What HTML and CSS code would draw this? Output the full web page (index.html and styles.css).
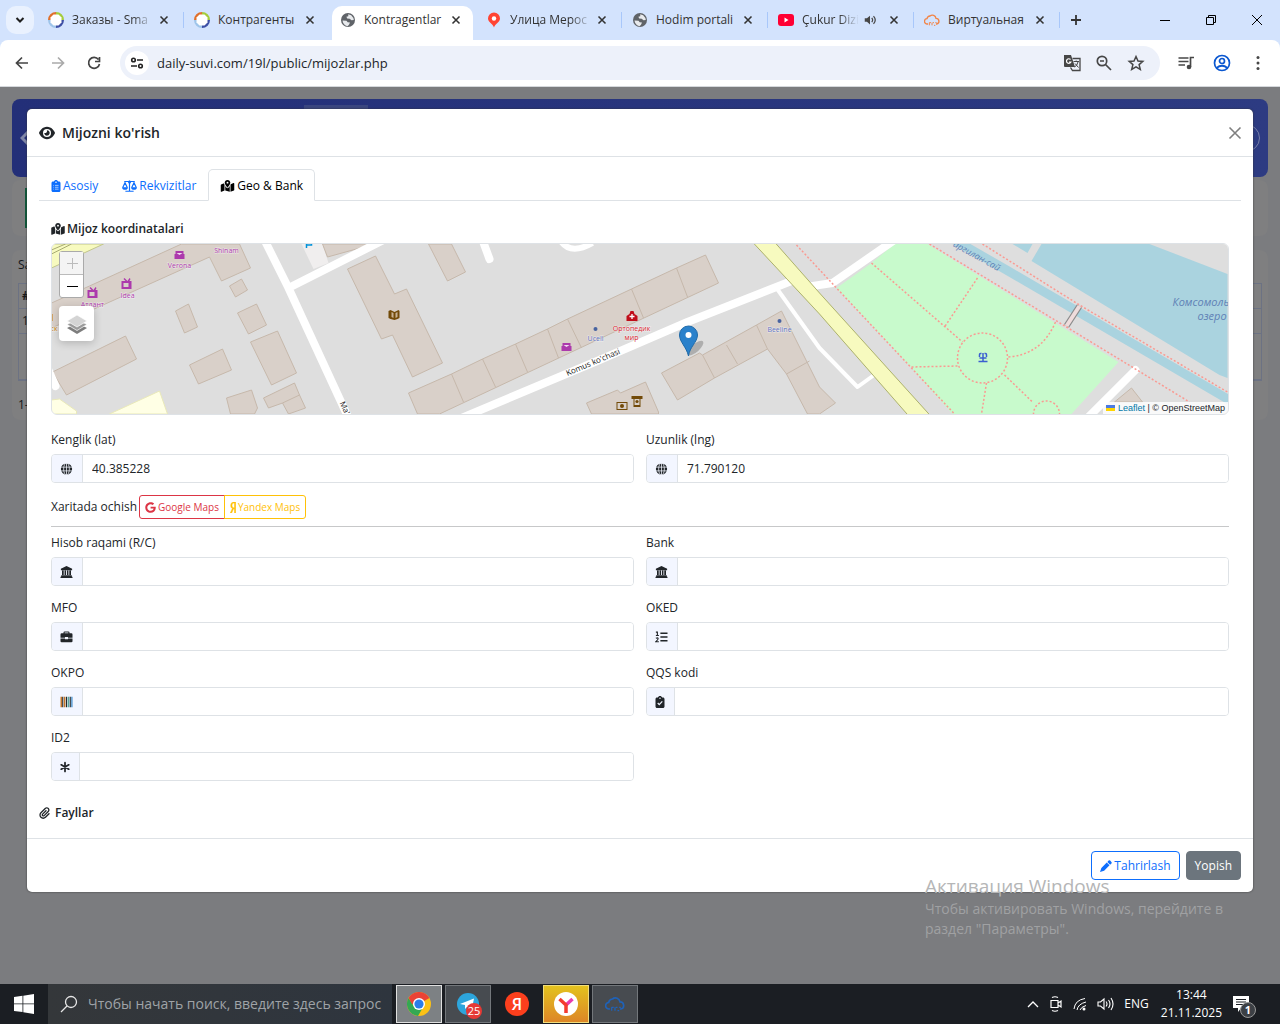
FILE: index.html
```html
<!DOCTYPE html>
<html lang="uz">
<head>
    <meta charset="UTF-8">
    <meta name="viewport" content="width=device-width, initial-scale=1.0">
    <title>Kontragentlar</title>
    <link rel="stylesheet" href="styles.css">
</head>
<body>
    <!-- icon sprite -->
    <svg class="sprite" aria-hidden="true">
        <symbol id="i-close" viewBox="0 0 16 16"><path d="M4 4l8 8M12 4l-8 8" fill="none" stroke="currentColor" stroke-width="1.8"/></symbol>
        <symbol id="i-smart" viewBox="0 0 16 16">
            <path d="M8 1.500A6.500 6.500 0 0 1 14.500 8" fill="none" stroke="#a5cc3c" stroke-width="3"/>
            <path d="M14.500 8A6.500 6.500 0 0 1 8 14.500" fill="none" stroke="#3d4fa5" stroke-width="3"/>
            <path d="M8 14.500A6.500 6.500 0 0 1 1.500 8" fill="none" stroke="#9fc5ea" stroke-width="3"/>
            <path d="M1.500 8A6.500 6.500 0 0 1 8 1.500" fill="none" stroke="#e0702c" stroke-width="3"/>
            <path d="M5.500 2.500h5l3 3v5l-3 3h-5l-3-3v-5z" fill="#fff"/>
        </symbol>
        <symbol id="i-world" viewBox="0 0 16 16">
            <circle cx="8" cy="8" r="7" fill="#5f6368"/>
            <path d="M2.500 8.500l4 .2 1.200 1.600 2.300.2-1 2.300-1.500 1.400C4.800 13.800 2.700 11.500 2.500 8.500zM8.200 2.300l3 .9 2.200 2.800.4 2-2.300.3-1.800-1.600-2.500-.3-.8-1.700 1.900-.5z" fill="#e8eaed"/>
        </symbol>
        <symbol id="i-cloud" viewBox="0 0 24 24"><path d="M6 18H5a4 4 0 0 1-.5-8A5 5 0 0 1 9 6a5.500 5.500 0 0 1 9 3.500A4.300 4.300 0 0 1 19 18h-1" fill="none" stroke="currentColor" stroke-width="2"/><path d="M8 16v4M8 16h2.500M12 16v4M15 16h-2M15 20h2M17 16h2" fill="none" stroke="currentColor" stroke-width="1.500"/></symbol>
        <symbol id="i-map" viewBox="0 0 576 512"><path fill="currentColor" fill-rule="evenodd" d="M408 120c0 54.600-73.100 151.900-105.200 192c-7.700 9.600-22 9.600-29.600 0C241.100 271.900 168 174.600 168 120C168 53.700 221.700 0 288 0s120 53.700 120 120zm8 80.400c3.500-6.900 6.700-13.800 9.600-20.600c.5-1.200 1-2.500 1.500-3.700l116-46.400C558.900 123.400 576 135 576 152V422.800c0 9.800-6 18.600-15.100 22.300L416 503V200.400zM137.600 138.300c2.400 14.100 7.200 28.300 12.800 41.500c2.900 6.800 6.100 13.700 9.600 20.600V451.800L32.900 502.700C17.100 509 0 497.400 0 480.400V209.600c0-9.800 6-18.600 15.100-22.300l122.600-49zM327.800 332c13.900-17.400 35.700-45.700 56.200-77V504.300L192 449.400V255c20.500 31.300 42.300 59.600 56.200 77c20.500 25.600 59.100 25.600 79.600 0zM288 152a40 40 0 1 0 0-80 40 40 0 1 0 0 80z"/></symbol>
        <symbol id="i-globe" viewBox="0 0 16 16"><circle cx="8" cy="8" r="7.500" fill="currentColor"/><path d="M0 5.500h16M0 10.500h16M8 0v16" stroke="#f3f6ff" fill="none"/><ellipse cx="8" cy="8" rx="3.800" ry="8" stroke="#f3f6ff" fill="none"/></symbol>
        <symbol id="i-bank" viewBox="0 0 16 16"><path fill="currentColor" d="M8 0l7.500 3.500V5.500H.5V3.500zM2 6h2.300v6H2zM5.400 6h2v6h-2zM8.600 6h2v6h-2zM11.700 6H14v6h-2.300zM1 12.300h14V13.500l1 1V16H0v-1.500l1-1z"/></symbol>
        <symbol id="i-case" viewBox="0 0 16 16"><path fill="currentColor" fill-rule="evenodd" d="M4 3V2q0-1.500 1.500-1.500h5Q12 .5 12 2v1h2.500Q16 3 16 4.500V9h-6V8H6v1H0V4.500Q0 3 1.500 3zm1.500 0h5V2h-5zM0 10h6v1h4v-1h6v3.500q0 1.500-1.500 1.500h-13Q0 15 0 13.500z"/></symbol>
        <symbol id="i-list" viewBox="0 0 16 16"><path d="M6.500 3H16M6.500 8H16M6.500 13H16" stroke="currentColor" stroke-width="2"/><path d="M.5 1.500H2.500V6M.5 6h4M.5 9.800q3-1.500 3 .5 0 1-3 4h4" fill="none" stroke="currentColor" stroke-width="1.500"/></symbol>
        <symbol id="i-barcode" viewBox="0 0 16 16"><path d="M1 1v14" stroke="#c3762a" stroke-width="2"/><path d="M3 1v14M8 1v14M13 1v14" stroke="#23282d" stroke-width="1.500"/><path d="M5.500 1v14" stroke="#c3762a" stroke-width="2"/><path d="M10.500 1v14" stroke="#5aa7a0" stroke-width="2"/><path d="M15.200 1v14" stroke="#2a7fc4" stroke-width="1.500"/></symbol>
        <symbol id="i-check" viewBox="0 0 384 512"><path fill="currentColor" fill-rule="evenodd" d="M192 0c-41.800 0-77.400 26.700-90.500 64H64C28.700 64 0 92.700 0 128V448c0 35.300 28.700 64 64 64H320c35.300 0 64-28.700 64-64V128c0-35.300-28.700-64-64-64H282.500C269.400 26.700 233.800 0 192 0zm0 64a32 32 0 1 1 0 64 32 32 0 1 1 0-64z"/><path d="M95 300l65 70 130-140" fill="none" stroke="#f3f6ff" stroke-width="52"/></symbol>
        <symbol id="i-clip-list" viewBox="0 0 384 512"><path fill="currentColor" fill-rule="evenodd" d="M192 0c-41.800 0-77.400 26.700-90.500 64H64C28.700 64 0 92.700 0 128V448c0 35.300 28.700 64 64 64H320c35.300 0 64-28.700 64-64V128c0-35.300-28.700-64-64-64H282.500C269.400 26.700 233.800 0 192 0zm0 64a32 32 0 1 1 0 64 32 32 0 1 1 0-64z"/><path d="M80 230h30M150 230h150M80 310h30M150 310h150M80 390h30M150 390h150" stroke="#fff" stroke-width="26"/></symbol>
        <symbol id="i-scale" viewBox="0 0 20 16"><path d="M3 2h14M10 1v14M4.500 15h11M1 10l3-6.500L7 10M13 10l3-6.500L19 10" fill="none" stroke="currentColor" stroke-width="1.600"/><circle cx="10" cy="2.500" r="2" fill="currentColor"/><path d="M0 9.500h8Q7.500 13 4 13T0 9.500zM12 9.500h8Q19.500 13 16 13t-4-3.500z" fill="currentColor"/></symbol>
        <symbol id="i-aster" viewBox="0 0 16 16"><path d="M8 1v14M2 4.500l12 7M14 4.500l-12 7" stroke="currentColor" stroke-width="2.800" stroke-linecap="round"/></symbol>
        <symbol id="i-layers" viewBox="0 0 26 26"><path d="M13 12l10 5-10 6-10-6z" fill="#7d7d7d"/><path d="M13 8.500l10 5-10 6-10-6z" fill="#9b9b9b" stroke="#fff" stroke-width=".7"/><path d="M13 4l10 6-10 6-10-6z" fill="#d4d4d4" stroke="#fff" stroke-width=".7"/></symbol>
    </svg>

    <header class="browser">
        <div class="tab-strip">
            <button class="tab-search" aria-label="Search tabs"><svg width="12" height="12" viewBox="0 0 12 12"><path d="M2.500 4L6 7.500 9.500 4" fill="none" stroke="#1f1f1f" stroke-width="2"/></svg></button>
            <div class="tabs">
                <div class="tab"><svg class="fav"><use href="#i-smart"/></svg><span class="tab-title fade">Заказы - Sma</span><button aria-label="Close"><svg><use href="#i-close"/></svg></button></div>
                <div class="tab no-line"><svg class="fav"><use href="#i-smart"/></svg><span class="tab-title">Контрагенты</span><button aria-label="Close"><svg><use href="#i-close"/></svg></button></div>
                <div class="tab active"><svg class="fav"><use href="#i-world"/></svg><span class="tab-title">Kontragentlar</span><button aria-label="Close"><svg><use href="#i-close"/></svg></button></div>
                <div class="tab"><svg class="fav" viewBox="0 0 16 16"><path d="M8 15.500C7 11.500 2 10.500 2 6.500a6 6 0 0 1 12 0c0 4-5 5-6 9z" fill="#f43"/><circle cx="8" cy="6.500" r="2.200" fill="#fff"/></svg><span class="tab-title fade">Улица Мерос</span><button aria-label="Close"><svg><use href="#i-close"/></svg></button></div>
                <div class="tab"><svg class="fav"><use href="#i-world"/></svg><span class="tab-title">Hodim portali</span><button aria-label="Close"><svg><use href="#i-close"/></svg></button></div>
                <div class="tab"><svg class="fav" viewBox="0 0 16 16"><rect y="2" width="16" height="12" rx="3" fill="#f03"/><path d="M6.500 5.500L10.500 8l-4 2.500z" fill="#fff"/></svg><span class="tab-title fade">Çukur Dizi</span><svg class="sound" viewBox="0 0 16 16"><path d="M2 6h2.500L8 3v10L4.500 10H2z" fill="#474747"/><path d="M10 5.500q2 2.500 0 5M12 3.500q4 4.500 0 9" fill="none" stroke="#474747" stroke-width="1.400"/></svg><button aria-label="Close"><svg><use href="#i-close"/></svg></button></div>
                <div class="tab"><svg class="fav orange"><use href="#i-cloud"/></svg><span class="tab-title">Виртуальная</span><button aria-label="Close"><svg><use href="#i-close"/></svg></button></div>
                <button class="new-tab" aria-label="New tab"><svg width="12" height="12" viewBox="0 0 12 12"><path d="M6 1v10M1 6h10" stroke="#333" stroke-width="1.800"/></svg></button>
            </div>
            <div class="win-buttons">
                <button aria-label="Minimize"><svg viewBox="0 0 12 12"><path d="M1 6.500h10" stroke="#000"/></svg></button>
                <button aria-label="Restore"><svg viewBox="0 0 12 12"><path d="M1.500 3.500h7v7h-7zM3.500 3.500v-2h7v7h-2" fill="none" stroke="#000"/></svg></button>
                <button aria-label="Close window"><svg viewBox="0 0 12 12"><path d="M1 1l10 10M11 1L1 11" stroke="#000"/></svg></button>
            </div>
        </div>
        <div class="toolbar">
            <button aria-label="Back"><svg viewBox="0 0 18 18"><path d="M15 9H4M9 3.500L3.500 9 9 14.500" fill="none" stroke="#444" stroke-width="1.700"/></svg></button>
            <button aria-label="Forward"><svg viewBox="0 0 18 18"><path d="M3 9h11M9 3.500L14.500 9 9 14.500" fill="none" stroke="#aaa" stroke-width="1.700"/></svg></button>
            <button aria-label="Reload"><svg viewBox="0 0 18 18"><path d="M13.500 5.500A5.500 5.500 0 1 0 14.500 10M14.500 3v4.500H10" fill="none" stroke="#444" stroke-width="1.700"/></svg></button>
            <div class="address">
                <span class="tune"><svg width="14" height="14" viewBox="0 0 14 14"><g fill="none" stroke="#222" stroke-width="1.600"><circle cx="3.500" cy="4" r="1.800"/><circle cx="10.500" cy="10" r="1.800"/><path d="M7 4h6M1 10h6"/></g></svg></span>
                <input class="url" type="text" aria-label="Address" value="daily-suvi.com/19l/public/mijozlar.php">
                <button aria-label="Translate"><svg viewBox="0 0 18 18"><path d="M1 1h7l4 12H2a1 1 0 0 1-1-1z" fill="#474747"/><path d="M9.500 4.500H17v12H9.500l-2-3" fill="none" stroke="#474747" stroke-width="1.300"/><path d="M7.500 5.500a2.300 2.300 0 1 0 .4 2.500H6" fill="none" stroke="#fff" stroke-width="1.200"/><path d="M10.500 7.500H16M13.200 6.500v1M15 8q-1 4-3.500 5M12 9.500l3.500 4" fill="none" stroke="#474747"/></svg></button>
                <button aria-label="Zoom"><svg viewBox="0 0 18 18"><circle cx="7" cy="7" r="4.700" fill="none" stroke="#474747" stroke-width="1.700"/><path d="M10.500 10.500L16 16M5 7h4" stroke="#474747" stroke-width="1.700"/></svg></button>
                <button aria-label="Bookmark"><svg viewBox="0 0 18 18"><path d="M9 2.500l2 4.500 4.800.4-3.700 3.200 1.200 4.800L9 12.800l-4.300 2.600 1.200-4.800L2.200 7.400 7 7z" fill="none" stroke="#474747" stroke-width="1.500"/></svg></button>
            </div>
            <button class="gap-left" aria-label="Media"><svg viewBox="0 0 18 18"><path d="M1.500 4h10M1.500 7.500h10M1.500 11H8M13.500 13V3.500H17" fill="none" stroke="#474747" stroke-width="1.700"/><circle cx="12" cy="13" r="2.300" fill="#474747"/></svg></button>
            <button aria-label="Profile"><svg viewBox="0 0 18 18"><g fill="none" stroke="#0b57d0" stroke-width="1.700"><circle cx="9" cy="9" r="7.500"/><circle cx="9" cy="7" r="2.500"/><path d="M3.500 14q5.500-4.500 11 0"/></g></svg></button>
            <button aria-label="Menu"><svg viewBox="0 0 18 18"><g fill="#474747"><circle cx="9" cy="3.500" r="1.500"/><circle cx="9" cy="9" r="1.500"/><circle cx="9" cy="14.500" r="1.500"/></g></svg></button>
        </div>
    </header>

    <main class="page">
        <!-- page under the backdrop -->
        <div class="under" aria-hidden="true">
            <div class="under-nav"><svg width="14" height="18" viewBox="0 0 14 18"><path d="M10 1L2 9l8 8" fill="none" stroke="#8087a8" stroke-width="3"/></svg><span class="under-link"></span><span class="under-ring"></span></div>
            <div class="under-card toolbar-card"><span class="under-green"></span></div>
            <div class="under-card list-card">
                <p>Sa</p>
                <div class="under-table"><b>#</b><span>1</span><span></span></div>
                <p>1-</p>
            </div>
        </div>

        <section class="modal" role="dialog" aria-labelledby="modal-title">
            <div class="modal-header">
                <svg width="16" height="16" viewBox="0 0 576 512"><path fill="currentColor" d="M288 32c-80.800 0-145.500 36.800-192.600 80.600C48.600 156 17.300 208 2.500 243.700c-3.300 7.900-3.300 16.700 0 24.600C17.300 304 48.600 356 95.400 399.400C142.500 443.200 207.200 480 288 480s145.500-36.800 192.600-80.600c46.800-43.500 78.100-95.400 93-131.100c3.300-7.900 3.300-16.700 0-24.600c-14.900-35.700-46.200-87.700-93-131.100C433.500 68.800 368.800 32 288 32zM144 256a144 144 0 1 1 288 0 144 144 0 1 1 -288 0zm144-64c0 35.300-28.700 64-64 64c-7.100 0-13.900-1.200-20.300-3.300c-5.500-1.800-11.900 1.600-11.700 7.400c.3 6.900 1.300 13.800 3.200 20.700c13.700 51.200 66.400 81.600 117.600 67.900s81.600-66.400 67.900-117.600c-11.100-41.500-47.800-69.400-88.600-71.100c-5.800-.2-9.200 6.100-7.400 11.700c2.100 6.400 3.300 13.200 3.300 20.300z"/></svg>
                <h1 id="modal-title">Mijozni ko'rish</h1>
                <button class="btn-close" aria-label="Yopish"><svg width="14" height="14" viewBox="0 0 14 14"><path d="M1.500 1.500l11 11M12.500 1.500l-11 11" stroke="#7f7f7f" stroke-width="1.600"/></svg></button>
            </div>

            <div class="modal-body">
                <nav class="nav-tabs">
                    <a href="#asosiy"><svg class="narrow"><use href="#i-clip-list"/></svg>Asosiy</a>
                    <a href="#rekvizitlar"><svg class="wide"><use href="#i-scale"/></svg>Rekvizitlar</a>
                    <a href="#geo" class="active"><svg class="wide"><use href="#i-map"/></svg>Geo &amp; Bank</a>
                </nav>

                <div class="tab-pane" id="geo">
                    <h2><svg width="14" height="12"><use href="#i-map"/></svg>Mijoz koordinatalari</h2>
                    <div class="map">
                        <svg class="map-canvas" viewBox="52 244 1177 170" preserveAspectRatio="xMidYMid slice">
                            <rect x="52" y="244" width="1177" height="170" fill="#dedede"/>
                            <!-- park and water -->
                            <path d="M837 288l35-25 23-19h33l191 118-47 52H953l-41-46z" fill="#c8facc"/>
                            <path d="M1042 244h108l78 30v104l-8-3-188-114zM1013 244h20l-5 9z" fill="#aad3df"/>
                            <path d="M955 240l52 30 223 130" fill="none" stroke="#aad3df" stroke-width="9"/>
                            <path d="M52 400l8-1 17 12v3H52zM110 414l50-23 8 23z" fill="#ffffe5" stroke="#e9e9b9"/>
                            <path d="M302 244h21l6 19-15 6z" fill="#f0eeee"/>
                            <!-- buildings -->
                            <g fill="#d9d0c9" stroke="#c6b8ab" stroke-width="1">
                                <path d="M52 303l38-17 92-42h58l11 24-29 13-12-24L88 312l-36 16z"/>
                                <path d="M230 286l12-7 6 11-12 7zM176 311l13-7 9 23-13 6zM238 313l19-9 10 21-18 9zM251 342l27-11 19 42-25 12zM190 365l33-16 9 21-33 14z"/>
                                <path d="M53 372l73-36 11 23-70 36zM227 398l25-8 6 18-3 6h-24zM264 398l31-15 5 12 6 13-17 6-6-11-14 5zM283 403l17-8"/>
                                <path d="M323 244h52l-47 13zM348 269l28-13 19 38 12-5 36 74-30 14-20-42-11 4zM429 244h23l14 28-18 9z"/>
                                <path d="M409 393l43-19 31-15 33-15 32-15 20-10 64-30 45-21 29-13 13 28-279 131h-22z"/>
                                <path d="M452 374l12 28M483 359l13 28M516 344l12 28M548 329l11 29M568 319l14 29M632 289l12 29M677 268l11 29"/>
                                <path d="M662 373l38-20 3 2 54-30 25-14 38 76 16 16-16 11h-12l-21-40-19-25-53 29-37 22z"/>
                                <path d="M703 355l12 23M727 345l11 19M757 325l11 24M810 361l-23 13"/>
                                <path d="M587 403l31-13 3 3 25-11 13 30v2h-67zM1115 402l17-14 11 14z"/>
                            </g>
                            <!-- roads -->
                            <g fill="none" stroke="#fff" stroke-linejoin="round">
                                <path d="M265 240l24 48 60 130M289 288l95-48" stroke-width="8"/>
                                <path d="M48 368l8 18M483 240l7 19" stroke-width="8" stroke-linecap="round"/>
                                <path d="M562 242q10 13 31 1" stroke-width="6"/>
                                <path d="M462 418l138-58 88-38 104-41" stroke-width="8"/>
                                <path d="M777 288l43 60 38 39 18-13" stroke-width="4"/>
                                <path d="M800 288l33-5 62-43" stroke-width="8"/>
                                <path d="M1136 370l-48 48" stroke-width="8" stroke-linecap="round"/>
                            </g>
                            <path d="M52 268l52-24H52z" fill="#f7fabf" stroke="#c2c68c"/>
                            <path d="M52 250l14-6M52 254l20-10" stroke="#a7ab72"/>
                            <path d="M753 242h22l45 51 113 125h-22l-91-104z" fill="#f7fabf" stroke="#adb26c"/>
                            <path d="M1067 326l13-20" stroke="#8a8a8a" stroke-width="6"/>
                            <path d="M1067 326l13-20" stroke="#eedcdc" stroke-width="4"/>
                            <!-- footpaths -->
                            <g fill="none" stroke="#fa9a92" stroke-width="1.500" stroke-dasharray="2 2">
                                <path d="M797 245l40 43 75 80 43 46M930 244l137 83 123 75M983 244l97 61 148 87M872 263l91 79M978 278l-33 49M1056 322q-14 33-48 35M912 367l46-1M1005 375l28 27M987 383l-5 31"/>
                                <circle cx="983" cy="358" r="25"/>
                                <circle cx="1047" cy="414" r="13"/>
                            </g>
                            <!-- points of interest -->
                            <g class="poi">
                                <g fill="#ac39ac">
                                    <path d="M176 251h8v3h1v5h-10v-5h1zM563 343h8v3h1v5h-10v-5h1z"/>
                                    <path d="M177 253h6l-3 2zM564 345h6l-3 2z" fill="#f3d9f3"/>
                                    <path fill-rule="evenodd" d="M88 290h4l-2-2 1-1 3 3 2-3 1 1-1 2h2v8H88zm2 2v4h5v-4zM122 281h4l-2-2 1-1 3 3 2-3 1 1-1 2h2v8h-10zm2 2v4h5v-4z"/>
                                    <text x="180" y="268">Verona</text><text x="227" y="253">Shinam</text><text x="128" y="298">Idea</text><text x="93" y="307">Атлант</text>
                                </g>
                                <g fill="#c77400"><text x="52" y="331">сіск</text><rect x="50" y="314" width="3" height="7"/></g>
                                <path d="M307 248v-6h5v3h-5" fill="none" stroke="#0092da" stroke-width="1.500"/>
                                <g fill="#734a08">
                                    <path d="M389 311l2-1 4 2 4-2 1 1v7l-2 1-3 1-4-1-2-1z"/><path d="M392 312v5l2 1v-5zM398 312v5l-2 1v-5z" fill="#c9b294"/>
                                    <path fill-rule="evenodd" d="M617 402h11v8h-11zm1 1v6h9v-6zM632 396h11v3h-2v8h-7v-8h-2zm3 3v6h5v-6z"/><circle cx="622.500" cy="406" r="2"/><circle cx="637.500" cy="401.500" r="1.600"/>
                                </g>
                                <g fill="#c00d1a"><path d="M627 321v-5l3-2 1-3h3l1 3 3 2v5z"/><path d="M632.500 314v5M630 316.500h5" stroke="#fff" stroke-width="1.300"/></g>
                                <g fill="#da2330"><text x="632" y="331">Ортопедик</text><text x="632" y="340">мир</text></g>
                                <g fill="#4863a0"><circle cx="596" cy="329" r="2"/><circle cx="780" cy="321" r="2"/></g>
                                <g fill="#5b70bf"><text x="596" y="341">Ucell</text><text x="780" y="332">Beeline</text></g>
                                <path d="M983.500 353v8M980 357v-2q0-2 2-1.500M987 357v-2q0-2-2-1.500M980 358h7M979 361.500h9" fill="none" stroke="#3b5fd0" stroke-width="1.500"/>
                            </g>
                            <g class="street">
                                <text x="568" y="376" transform="rotate(-23 568 376)">Komus ko'chasi</text>
                                <text x="340" y="403" transform="rotate(65 340 403)">Ma'</text>
                            </g>
                            <g class="water">
                                <text x="953" y="246" font-size="9" transform="rotate(29 953 246)">аргилан-сай</text>
                                <text x="1173" y="306" font-size="11">Комсомоль</text>
                                <text x="1198" y="320" font-size="11">озеро</text>
                            </g>
                            <!-- marker -->
                            <ellipse cx="696" cy="348" rx="10" ry="4" transform="rotate(-42 696 348)" fill="#555" opacity=".35"/>
                            <path d="M689 356C687 347 680 342 680 335a9 9 0 0 1 18 0c0 7-8 12-9 21z" fill="#2a81cb" stroke="#1f6aa8"/>
                            <circle cx="689" cy="335" r="3" fill="#fff"/>
                        </svg>
                        <div class="map-controls">
                            <div class="zoom-box">
                                <button disabled aria-label="Zoom in"><svg width="12" height="12" viewBox="0 0 12 12"><path d="M6.500 1v11M1 6.500h11" stroke="#bbb"/></svg></button>
                                <button aria-label="Zoom out"><svg width="12" height="12" viewBox="0 0 12 12"><path d="M1 6.500h11" stroke="#000" stroke-width="1.200"/></svg></button>
                            </div>
                            <button class="layers" aria-label="Layers"><svg width="26" height="26"><use href="#i-layers"/></svg></button>
                        </div>
                        <div class="attribution"><svg width="9" height="6" viewBox="0 0 9 6"><path fill="#4c7be1" d="M0 0h9v3H0z"/><path fill="#ffd500" d="M0 3h9v3H0z"/></svg> <a href="#leaflet">Leaflet</a> | © OpenStreetMap</div>
                    </div>

                    <div class="row">
                        <div class="field">
                            <label for="lat">Kenglik (lat)</label>
                            <div class="input-group"><span class="addon"><svg><use href="#i-globe"/></svg></span><input id="lat" type="text" value="40.385228"></div>
                        </div>
                        <div class="field">
                            <label for="lng">Uzunlik (lng)</label>
                            <div class="input-group"><span class="addon"><svg><use href="#i-globe"/></svg></span><input id="lng" type="text" value="71.790120"></div>
                        </div>
                    </div>

                    <div class="open-map">
                        <span>Xaritada ochish</span>
                        <div class="btn-group">
                            <a class="google" href="#google"><svg width="11" height="11" viewBox="0 0 488 512"><path fill="currentColor" d="M488 261.800C488 403.300 391.100 504 248 504 110.800 504 0 393.200 0 256S110.800 8 248 8c66.800 0 123 24.500 166.300 64.900l-67.500 64.900C258.500 52.600 94.300 116.600 94.300 256c0 86.500 69.100 156.600 153.700 156.600 98.200 0 135-70.400 140.800-106.900H248v-85.300h236.100c2.300 12.700 3.900 24.900 3.900 41.400z"/></svg>Google Maps</a>
                            <a class="yandex" href="#yandex"><svg width="6" height="11" viewBox="0 0 256 512"><path fill="currentColor" stroke="currentColor" stroke-width="24" d="M153.100 315.800L65.700 512H2l96-209.800c-45.100-22.900-75.200-64.400-75.200-141.100C22.700 53.700 90.800 0 171.700 0H254v512h-55.100V315.800h-45.800zm45.800-269.300h-29.400c-44.400 0-87.400 29.400-87.400 114.600 0 82.300 39.400 108.800 87.400 108.800h29.400V46.500z"/></svg>Yandex Maps</a>
                        </div>
                    </div>
                    <hr>

                    <div class="row">
                        <div class="field">
                            <label for="rc">Hisob raqami (R/C)</label>
                            <div class="input-group"><span class="addon"><svg><use href="#i-bank"/></svg></span><input id="rc" type="text"></div>
                        </div>
                        <div class="field">
                            <label for="bank">Bank</label>
                            <div class="input-group"><span class="addon"><svg><use href="#i-bank"/></svg></span><input id="bank" type="text"></div>
                        </div>
                        <div class="field">
                            <label for="mfo">MFO</label>
                            <div class="input-group"><span class="addon"><svg><use href="#i-case"/></svg></span><input id="mfo" type="text"></div>
                        </div>
                        <div class="field">
                            <label for="oked">OKED</label>
                            <div class="input-group"><span class="addon"><svg><use href="#i-list"/></svg></span><input id="oked" type="text"></div>
                        </div>
                        <div class="field">
                            <label for="okpo">OKPO</label>
                            <div class="input-group"><span class="addon"><svg><use href="#i-barcode"/></svg></span><input id="okpo" type="text"></div>
                        </div>
                        <div class="field">
                            <label for="qqs">QQS kodi</label>
                            <div class="input-group"><span class="addon"><svg class="narrow"><use href="#i-check"/></svg></span><input id="qqs" type="text"></div>
                        </div>
                        <div class="field">
                            <label for="id2">ID2</label>
                            <div class="input-group"><span class="addon"><svg class="narrow"><use href="#i-aster"/></svg></span><input id="id2" type="text"></div>
                        </div>
                    </div>
                </div>

                <h2 class="files"><svg width="11" height="12" viewBox="0 0 448 512"><path fill="currentColor" d="M364.200 83.800c-24.400-24.400-64-24.400-88.400 0l-184 184c-42.100 42.100-42.100 110.300 0 152.400s110.300 42.100 152.400 0l152-152c10.900-10.900 28.700-10.900 39.600 0s10.900 28.700 0 39.600l-152 152c-64 64-167.600 64-231.600 0s-64-167.600 0-231.600l184-184c46.300-46.300 121.300-46.300 167.600 0s46.300 121.300 0 167.600l-176 176c-28.600 28.600-75 28.600-103.600 0s-28.600-75 0-103.600l144-144c10.900-10.900 28.700-10.900 39.600 0s10.900 28.700 0 39.600l-144 144c-6.700 6.700-6.700 17.700 0 24.400s17.700 6.700 24.400 0l176-176c24.400-24.400 24.400-64 0-88.400z"/></svg>Fayllar</h2>
            </div>

            <div class="modal-footer">
                <button class="btn btn-outline"><svg width="12" height="12" viewBox="0 0 16 16"><path d="M11.500.8q1-1 2 0l1.700 1.700q1 1 0 2L13.500 6.200 9.800 2.500zM9 3.300L12.700 7 5.500 14.200 0 16l1.800-5.500z" fill="currentColor"/></svg>Tahrirlash</button>
                <button class="btn btn-secondary">Yopish</button>
            </div>
        </section>

        <div class="watermark">
            <strong>Активация Windows</strong>
            <span>Чтобы активировать Windows, перейдите в раздел "Параметры".</span>
        </div>
    </main>

    <footer class="taskbar">
        <button class="start" aria-label="Start"><svg width="20" height="20" viewBox="0 0 20 20"><path d="M0 3l8.500-1.200V9.500H0zM9.300 1.700L20 0v9.500H9.300zM0 10.300h8.500V18L0 16.900zM9.300 10.300H20V20L9.300 18.200z" fill="#fff"/></svg></button>
        <label class="search"><svg width="18" height="18" viewBox="0 0 18 18"><circle cx="11" cy="7" r="5.500" fill="none" stroke="#e6e6e6" stroke-width="1.300"/><path d="M7 11l-6 6" stroke="#e6e6e6" stroke-width="1.300"/></svg><input type="text" placeholder="Чтобы начать поиск, введите здесь запрос" aria-label="Поиск"></label>
        <div class="apps">
            <button class="app current" aria-label="Chrome"><svg width="24" height="24" viewBox="0 0 24 24"><circle cx="12" cy="12" r="12" fill="#fbc116"/><path d="M12 12L1.600 6A12 12 0 0 1 22.400 6z" fill="#ea4335"/><path d="M1.600 6a12 12 0 0 0 9.400 18l5.500-9.500H7z" fill="#34a853"/><path d="M1.600 6H12v6H5z" fill="#ea4335"/><circle cx="12" cy="12" r="6" fill="#fff"/><circle cx="12" cy="12" r="4.600" fill="#2b7de9"/></svg></button>
            <button class="app open" aria-label="Telegram"><svg width="24" height="24" viewBox="0 0 24 24"><circle cx="12" cy="12" r="11" fill="#2da5dc"/><path d="M4 12l14-5.500-2.500 12-4.500-3.500L9 17v-4z" fill="#fff"/></svg><span class="badge">25</span></button>
            <button class="app" aria-label="Yandex"><svg width="24" height="24" viewBox="0 0 24 24"><circle cx="12" cy="12" r="12" fill="#fc3f1d"/><text class="ya" x="12" y="18" text-anchor="middle">Я</text></svg></button>
            <button class="app yellow" aria-label="Yandex Browser"><svg width="24" height="24" viewBox="0 0 24 24"><circle cx="12" cy="12" r="12" fill="#fff"/><path d="M12 13l6.500-6" stroke="#e83cb0" stroke-width="3.500"/><path d="M5.500 7l6.500 6v8" fill="none" stroke="#f43b2f" stroke-width="3.500"/></svg></button>
            <button class="app open blue" aria-label="VTC"><svg width="20" height="20"><use href="#i-cloud"/></svg></button>
        </div>
        <div class="tray">
            <svg width="12" height="8" viewBox="0 0 12 8"><path d="M1 7l5-5 5 5" fill="none" stroke="#fff" stroke-width="1.300"/></svg>
            <svg width="14" height="16" viewBox="0 0 14 16"><path d="M2 4.500h7v7H2zM9 7l3-2v6L9 9M3 1.500q3-1.500 6 0M3 14.500q3 1.500 6 0" fill="none" stroke="#fff" stroke-width="1.200"/></svg>
            <svg width="14" height="14" viewBox="0 0 14 14"><path d="M1 12Q2 3 12 1.500M4 13q1-6 9-8M7 13q1-3 6-4.500" fill="none" stroke="#fff"/><circle cx="11" cy="12" r="1.500" fill="#fff"/></svg>
            <svg width="17" height="14" viewBox="0 0 17 14"><path d="M1 5h2.500L7 2v10L3.500 9H1zM9 4.500q2 2.500 0 5M11.500 3q3 4 0 8M14 1q4 6 0 12" fill="none" stroke="#fff" stroke-width="1.100"/></svg>
            <span>ENG</span>
            <time>13:44<br>21.11.2025</time>
            <span class="notice"><svg width="18" height="18" viewBox="0 0 18 18"><path d="M1 1h16v12h-8l-3 4v-4H1z" fill="#fff"/><path d="M4 4.500h10M4 7h10M4 9.500h7" stroke="#1b1e23"/></svg><b>1</b></span>
        </div>
    </footer>
</body>
</html>
```
FILE: styles.css
```css
* {
    box-sizing: border-box;
}
body {
    margin: 0;
    min-height: 100vh;
    display: flex;
    flex-direction: column;
    font-family: "Open Sans", "Noto Sans", sans-serif;
    font-size: 12px;
    line-height: 18px;
    color: #212529;
}
button, input {
    font: inherit;
    color: inherit;
}
button {
    border: 0;
    padding: 0;
    background: none;
    cursor: pointer;
}
button > svg {
    display: block;
    margin: auto;
}
a {
    text-decoration: none;
}
svg {
    flex: none;
}
.sprite {
    position: absolute;
    width: 0;
    height: 0;
}

/* browser window */
.browser {
    background: #d3e3fd;
}
.tab-strip {
    display: flex;
    height: 40px;
    padding-left: 6px;
}
.tab-search {
    width: 28px;
    height: 28px;
    margin: 6px 4px 0 0;
    border-radius: 10px;
    background: #e9f1fe;
}
.tabs {
    display: flex;
    flex: 1;
    min-width: 0;
}
.tab {
    flex: 0 1 146px;
    min-width: 0;
    height: 34px;
    margin-top: 6px;
    padding: 0 13px 6px 10px;
    display: flex;
    align-items: center;
    background: linear-gradient(#a8c7fa, #a8c7fa) right 6px / 1px 16px no-repeat;
}
.tab.no-line {
    background: none;
}
.tab.active {
    background: #fff;
    border-radius: 10px 10px 0 0;
    margin: 6px 3px 0 2px;
    padding: 0 10px 6px 8px;
    flex-basis: 141px;
}
.tab svg {
    width: 16px;
    height: 16px;
}
.tab button, .tab button svg {
    display: block;
    width: 14px;
    height: 14px;
    color: #333;
}
.tab .sound {
    width: 14px;
    height: 14px;
    margin-right: 10px;
}
.orange {
    color: #f28446;
}
.tab-title {
    flex: 1;
    min-width: 0;
    padding-left: 8px;
    overflow: hidden;
    white-space: nowrap;
    color: #333;
}
.fade {
    -webkit-mask-image: linear-gradient(to left, transparent 4px, #000 24px);
    mask-image: linear-gradient(to left, transparent 4px, #000 24px);
}
.new-tab {
    width: 32px;
}
.win-buttons {
    display: flex;
}
.win-buttons button {
    width: 46px;
}
.win-buttons svg {
    width: 12px;
    height: 12px;
}
.toolbar {
    display: flex;
    align-items: center;
    height: 47px;
    padding: 0 4px;
    background: #fff;
    border-bottom: 1px solid #d5d8dc;
    border-radius: 8px 8px 0 0;
}
.toolbar button {
    width: 36px;
    height: 34px;
}
.toolbar button svg {
    width: 18px;
    height: 18px;
}
.address {
    display: flex;
    align-items: center;
    flex: 1;
    height: 34px;
    margin-left: 8px;
    padding: 0 8px 0 5px;
    border-radius: 17px;
    background: #edf1fa;
}
.address button {
    width: 32px;
}
.tune {
    display: grid;
    place-items: center;
    width: 24px;
    height: 24px;
    border-radius: 50%;
    background: #fff;
}
.url {
    flex: 1;
    min-width: 0;
    padding: 0 8px;
    border: 0;
    background: none;
    font-size: 13px;
}
.toolbar .gap-left {
    margin-left: 8px;
}

/* page and dimmed content */
.page {
    flex: 1;
    display: grid;
    position: relative;
    background: #7b7c7f;
}
.under, .modal {
    grid-area: 1 / 1;
}
.under {
    padding: 12px;
    color: #15171a;
}
.under-nav {
    display: flex;
    align-items: center;
    height: 78px;
    padding: 0 8px;
    border-radius: 8px;
    background: linear-gradient(90deg, #232f78, #2d3b82);
}
.under-link {
    align-self: flex-start;
    width: 64px;
    height: 30px;
    margin: 6px auto 0 270px;
    background: #3a467f;
}
.under-ring {
    width: 28px;
    height: 28px;
    border: 1px solid #777fa8;
    border-radius: 50%;
}
.under-card {
    padding: 6px;
    border-radius: 8px;
    background: #7f7f80;
}
.toolbar-card {
    height: 56px;
    margin: 3px 0 14px;
    padding: 8px 13px;
}
.under-green {
    display: block;
    width: 60px;
    height: 40px;
    background: #0d5a3a;
}
.list-card p {
    margin: 0;
}
.under-table {
    display: grid;
    grid-template-rows: 25px 25px 46px;
    margin: 9px 0 15px;
    border: 1px solid #6c7283;
}
.under-table > * {
    padding: 3px;
    border-bottom: 1px solid #6c7283;
}

/* modal */
.modal {
    align-self: start;
    margin: 22px 27px;
    border-radius: 5px;
    background: #fff;
    box-shadow: 0 0 2px #333;
}
.modal-header {
    display: flex;
    align-items: center;
    gap: 7px;
    height: 48px;
    padding: 0 11px 0 12px;
    border-bottom: 1px solid #dee2e6;
}
.modal-header h1 {
    flex: 1;
    margin: 0;
    font-size: 14px;
    font-weight: 600;
}
.modal-body {
    padding: 12px 12px 16px;
}
.nav-tabs {
    display: flex;
    border-bottom: 1px solid #dee2e6;
}
.nav-tabs a {
    display: flex;
    align-items: center;
    gap: 2px;
    height: 32px;
    margin-bottom: -1px;
    padding: 2px 11px 0;
    border: 1px solid transparent;
    border-radius: 5px 5px 0 0;
    color: #0d6efd;
}
.nav-tabs a.active {
    color: #000;
    border-color: #dee2e6 #dee2e6 #fff;
    background: #fff;
}
.nav-tabs svg {
    height: 12px;
}
.narrow {
    width: 10px;
}
.wide {
    width: 15px;
}
.tab-pane {
    padding: 19px 12px 12px;
}
h2 {
    display: flex;
    align-items: center;
    gap: 2px;
    margin: 0;
    font-size: 12px;
    font-weight: 600;
}
.map {
    position: relative;
    height: 172px;
    margin: 5px 0 15px;
    border: 1px solid #dee2e6;
    border-radius: 6px;
    overflow: hidden;
}
.map-canvas {
    display: block;
    width: 100%;
    height: 100%;
}
.poi text {
    font-size: 7px;
    text-anchor: middle;
    paint-order: stroke;
    stroke: #ffffff88;
    stroke-width: 1px;
}
.street text {
    font-size: 8px;
    fill: #222;
    paint-order: stroke;
    stroke: #fff;
    stroke-width: 1px;
}
.water {
    fill: #6082b6;
    font-style: italic;
}
.map-controls {
    position: absolute;
    left: 7px;
    top: 7px;
}
.zoom-box {
    width: 25px;
    border: 1px solid #aaa;
    border-radius: 3px;
    background: #fff;
}
.zoom-box button {
    display: block;
    width: 100%;
    height: 22px;
}
.zoom-box button:disabled {
    height: 23px;
    background: #f4f4f4;
    border-bottom: 1px solid #bbb;
}
.layers {
    display: grid;
    place-items: center;
    width: 35px;
    height: 35px;
    margin-top: 8px;
    border-radius: 4px;
    background: #fff;
    box-shadow: 0 2px 8px #0003;
}
.attribution {
    position: absolute;
    right: 0;
    bottom: 0;
    padding: 0 3px;
    background: #fffc;
    font: 9px/12px "Liberation Sans", sans-serif;
}
.attribution a {
    color: #0078a8;
}
.row {
    display: grid;
    grid-template-columns: 1fr 1fr;
    gap: 12px;
}
.field {
    padding-top: 1px;
}
.field label {
    display: block;
    margin-bottom: 5px;
}
.input-group {
    display: flex;
    height: 29px;
    border: 1px solid #dee2e6;
    border-radius: 4px;
    overflow: hidden;
}
.addon {
    display: flex;
    align-items: center;
    padding: 0 9px 0 8px;
    border-right: 1px solid #dee2e6;
    background: #f3f6ff;
}
.addon svg {
    width: 13px;
    height: 12px;
}
.addon svg.narrow {
    width: 10px;
}
.input-group input {
    flex: 1;
    min-width: 0;
    border: 0;
    padding: 1px 9px 0;
    background: #fff;
}
.open-map {
    display: flex;
    align-items: center;
    gap: 2px;
    margin-top: 12px;
}
.btn-group {
    display: flex;
}
.btn-group a {
    display: flex;
    align-items: center;
    gap: 2px;
    height: 24px;
    padding: 0 5px;
    border: 1px solid;
    font-size: 10px;
}
.google {
    color: #dc3545;
    border-radius: 3px 0 0 3px;
}
.yandex {
    color: #ffc107;
    margin-left: -1px;
    border-radius: 0 3px 3px 0;
}
hr {
    margin: 7px 0 6px;
    border: 0;
    border-top: 1px solid #c7c8c9;
}
.files {
    gap: 5px;
    margin-top: 11px;
}
.modal-footer {
    display: flex;
    justify-content: flex-end;
    gap: 6px;
    padding: 12px;
    border-top: 1px solid #dee2e6;
}
.btn {
    display: flex;
    align-items: center;
    gap: 2px;
    height: 29px;
    padding: 0 8px;
    border: 1px solid;
    border-radius: 4px;
}
.btn > svg {
    margin: 0;
}
.btn-outline {
    color: #0d6efd;
}
.btn-secondary {
    color: #fff;
    background: #6c757d;
    border-color: #6c757d;
}
.watermark {
    position: absolute;
    right: 45px;
    bottom: 45px;
    width: 310px;
    color: #a0a1a3;
    font-size: 14px;
    line-height: 20px;
    pointer-events: none;
}
.watermark strong {
    display: block;
    font-size: 19px;
    line-height: 25px;
    font-weight: 400;
    color: #b5b6b7;
}

/* taskbar */
.taskbar {
    display: flex;
    height: 40px;
    color: #fff;
    background: #1b1e23;
}
.start {
    width: 48px;
}
.search {
    display: flex;
    align-items: center;
    gap: 10px;
    width: 344px;
    padding-left: 12px;
    background: linear-gradient(90deg, #34373a, #2e353e);
}
.search input {
    flex: 1;
    min-width: 0;
    border: 0;
    padding: 0;
    background: none;
    font-size: 14px;
}
.search input::placeholder {
    color: #9fa3a7;
}
.apps {
    display: flex;
    gap: 3px;
    padding: 1px 4px;
    flex: 1;
}
.app {
    display: grid;
    place-items: center;
    position: relative;
    width: 46px;
    border: 1px solid transparent;
}
.app.open {
    background: #474b50;
    border-color: #73777b;
}
.app.current {
    background: #7d8184;
    border-color: #e0e0e0;
}
.app.yellow {
    background: linear-gradient(#e3c21e, #dd8627);
    border-color: #f1dd7c;
}
.app.blue {
    color: #1f62b8;
}
.badge {
    position: absolute;
    right: 8px;
    bottom: 3px;
    width: 16px;
    height: 16px;
    border-radius: 50%;
    background: #e53935;
    font-size: 11px;
    line-height: 16px;
}
.ya {
    fill: #fff;
    font-size: 16px;
    font-weight: 600;
}
.tray {
    display: flex;
    align-items: center;
    gap: 10px;
    padding-right: 30px;
}
.tray time {
    text-align: center;
    margin-left: 2px;
}
.notice {
    position: relative;
}
.notice svg {
    display: block;
}
.notice b {
    position: absolute;
    left: 8px;
    top: 7px;
    width: 16px;
    height: 16px;
    border: 1px solid #999;
    border-radius: 50%;
    background: #3c4045;
    font-size: 11px;
    line-height: 14px;
    text-align: center;
}
```
